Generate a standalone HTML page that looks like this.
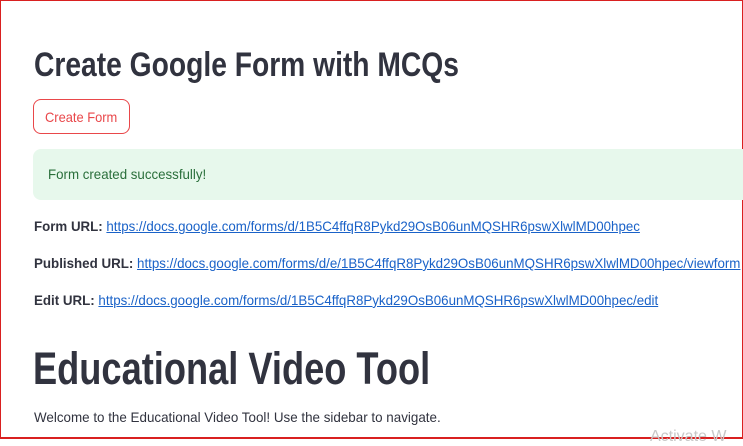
<!DOCTYPE html>
<html><head><style>
html,body{margin:0;padding:0;}
body{width:743px;height:440px;overflow:hidden;background:#fff;font-family:"Liberation Sans",sans-serif;color:#31333f;position:relative;}
.frame{position:absolute;left:0;top:0;width:741px;height:436px;border:1px solid #d92020;border-bottom:2px solid #d92020;}
.a{position:absolute;white-space:nowrap;transform-origin:left top;}
a{color:#1a62c8;text-decoration:underline;}
</style></head><body>
<div class="frame"></div>
<div class="a" style="left:34px;top:46px;font-size:34px;font-weight:bold;transform:scaleX(0.83);">Create Google Form with MCQs</div>
<div style="position:absolute;left:33px;top:99px;width:95px;height:33px;border:1px solid #e9474a;border-radius:8px;"></div>
<div class="a" style="left:45px;top:109px;font-size:14px;color:#e9474a;transform:scaleX(0.92);">Create Form</div>
<div style="position:absolute;left:33px;top:149px;width:720px;height:51px;background:#e7f8ec;border-radius:8px;"></div>
<div class="a" style="left:48px;top:166px;font-size:14px;color:#2a6f3b;transform:scaleX(0.95);">Form created successfully!</div>
<div class="a" style="left:34px;top:218px;font-size:14px;transform:scaleX(0.95);"><b>Form URL:</b> <a>https://docs.google.com/forms/d/1B5C4ffqR8Pykd29OsB06unMQSHR6pswXlwlMD00hpec</a></div>
<div class="a" style="left:34px;top:255px;font-size:14px;transform:scaleX(0.953);"><b>Published URL:</b> <a>https://docs.google.com/forms/d/e/1B5C4ffqR8Pykd29OsB06unMQSHR6pswXlwlMD00hpec/viewform</a></div>
<div class="a" style="left:34px;top:292px;font-size:14px;transform:scaleX(0.952);"><b>Edit URL:</b> <a>https://docs.google.com/forms/d/1B5C4ffqR8Pykd29OsB06unMQSHR6pswXlwlMD00hpec/edit</a></div>
<div class="a" style="left:33px;top:343px;font-size:45px;font-weight:bold;transform:scaleX(0.805);">Educational Video Tool</div>
<div class="a" style="left:34px;top:409px;font-size:14px;transform:scaleX(0.957);">Welcome to the Educational Video Tool! Use the sidebar to navigate.</div>
<div class="a" style="left:650px;top:428px;font-size:16px;color:#c8c8c8;">Activate W</div>
</body></html>
